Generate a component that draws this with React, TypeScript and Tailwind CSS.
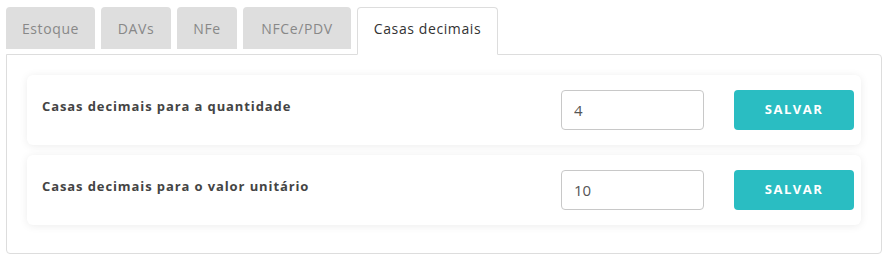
import { useState } from "react";

const tabs = [
    { label: "Estoque", w: "w-[89px]" },
    { label: "DAVs", w: "w-[70px]" },
    { label: "NFe", w: "w-[60px]" },
    { label: "NFCe/PDV", w: "w-[108px]" },
];

const SettingRow = ({ label, initial }: { label: string; initial: string }) => {
    const [value, setValue] = useState(initial);
    return (
        <div className="flex items-center h-[70px] bg-white rounded-md shadow-[0_1px_8px_rgba(0,0,0,0.08)] pl-[15px] pr-[7px]">
            <span className="flex-1 mb-[6px] text-[13px] font-bold text-[#444] tracking-[0.9px]">
                {label}
            </span>
            <input
                type="text"
                value={value}
                onChange={(e) => setValue(e.target.value)}
                className="w-[143px] h-[40px] px-[12px] border border-[#c8c8c8] rounded-[4px] text-[15px] text-[#555] outline-none"
            />
            <button className="ml-[30px] w-[120px] h-[40px] rounded-[4px] bg-[#2abdc2] text-white text-[13px] font-bold tracking-[1.5px]">
                SALVAR
            </button>
        </div>
    );
}

export default function App() {
    return (
        <div className="w-[884px] h-[270px] bg-white pt-[7px] pl-[6px] font-['Open_Sans',sans-serif]">
            {/* Tabs */}
            <div className="flex items-start gap-[6px]">
                {tabs.map((t) => (
                    <div
                        key={t.label}
                        className={`${t.w} h-[42px] flex items-center justify-center bg-[#dedede] rounded-t-[4px] text-[14px] text-[#888] tracking-[0.6px]`}
                    >
                        {t.label}
                    </div>
                ))}
                <div className="relative z-10 w-[141px] h-[48px] flex items-center justify-center bg-white border border-[#ddd] border-b-white rounded-t-[4px] text-[14px] text-[#333] tracking-[0.6px] pb-[6px]">
                    Casas decimais
                </div>
            </div>

            {/* Panel */}
            <div className="-mt-px w-[876px] border border-[#ddd] rounded-b-[4px] rounded-tr-[4px] pt-[20px] px-[20px] pb-[28px] flex flex-col gap-[10px]">
                <SettingRow label="Casas decimais para a quantidade" initial="4" />
                <SettingRow label="Casas decimais para o valor unitário" initial="10" />
            </div>
        </div>
    );
}
